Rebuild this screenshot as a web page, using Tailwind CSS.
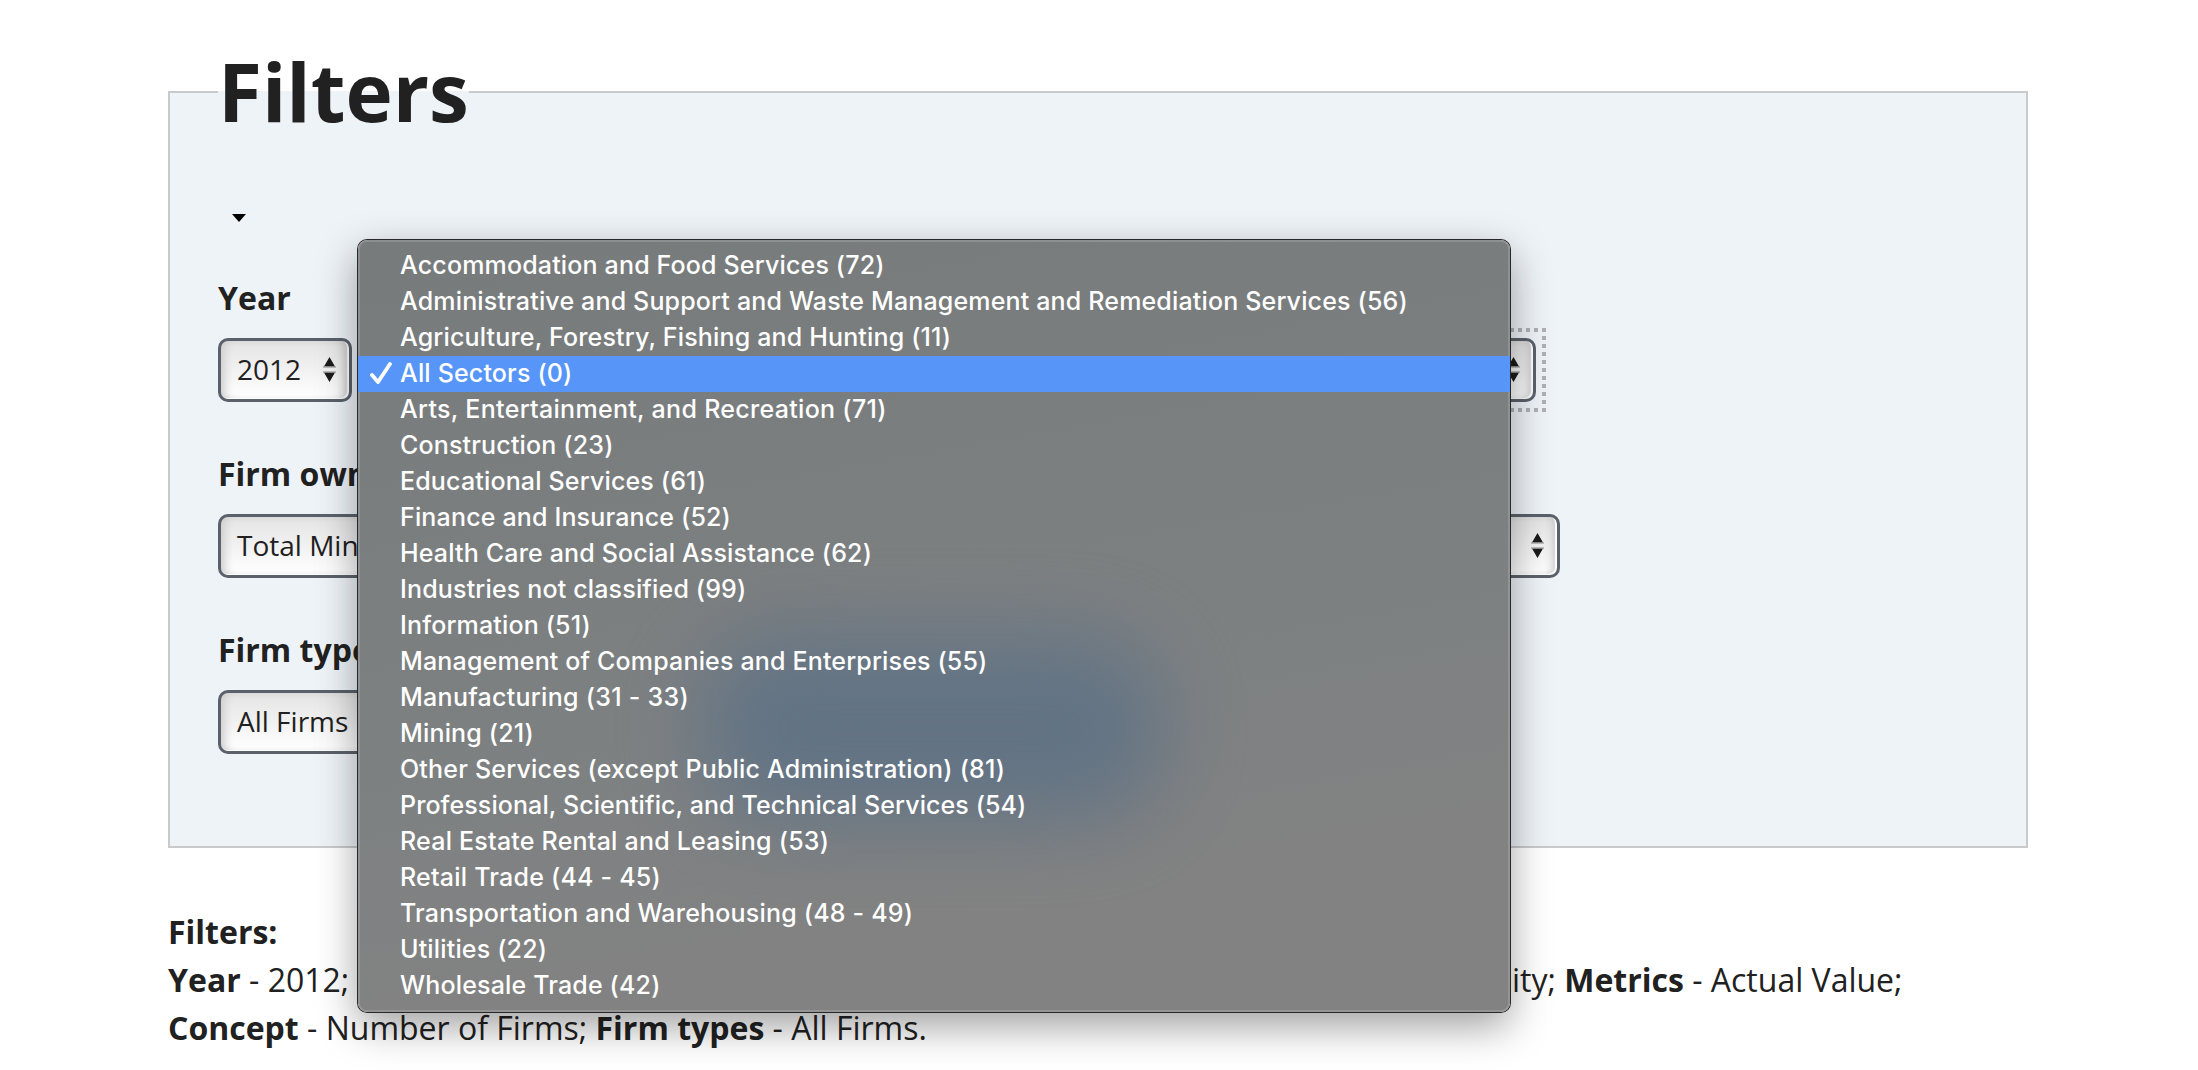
<!DOCTYPE html>
<html lang="en">
<head>
<meta charset="utf-8">
<title>Filters</title>
<script src="https://cdn.jsdelivr.net/npm/@tailwindcss/browser@4"></script>
</head>
<body class="relative h-[1070px] w-[2198px] overflow-hidden bg-white font-['Open_Sans',sans-serif] text-[#212121]">
<svg class="hidden">
  <symbol id="arrows" viewBox="0 0 13 26"><path d="M6.500 0L12 9.500H1zM1 15.500H12L6.500 25z" fill="#1b1b1b"/><path d="M0 10h13M0 15h13" stroke="#8a8a8a" stroke-width="1"/></symbol>
</svg>

<main class="flex flex-col px-[168px] pt-[91px] pr-[170px]">
  <section class="flex h-[757px] flex-col border-2 border-[#c9cacc] bg-[#eef3f8] pl-12">
    <h1 class="-mt-[56px] flex h-[108px] w-[251px] items-center bg-[linear-gradient(#fff_54px,#eef3f8_54px)] text-[80px] leading-none font-bold">Filters</h1>
    <svg class="mt-[69px] ml-[14px] h-2 w-[14px]" viewBox="0 0 14 8"><path d="M0 0h14L7 8z" fill="#000"/></svg>

    <div class="mt-[52px] flex h-16 flex-col">
      <label class="h-16 shrink-0 text-[32px] leading-[48px] font-bold">Year</label>
      <div class="flex gap-6">
        <div class="flex h-16 w-[134px] items-center justify-between rounded-[10px] border-3 border-[#5b616b] bg-linear-to-b from-[#e4e4e4] to-white pr-[13px] pl-4 text-[28px] shadow-[inset_-2px_-1px_1px_#fff,inset_-8px_0_8px_-4px_#c4c4c4,inset_8px_0_8px_-4px_#cfcfcf]"><span class="pb-0.5">2012</span><svg class="h-[26px] w-[13px]"><use href="#arrows"/></svg></div>
        <div class="relative flex h-16 w-[1160px] items-center justify-end rounded-[10px] border-3 border-[#5b616b] bg-linear-to-b from-[#e4e4e4] to-white pr-[13px] shadow-[inset_-2px_-1px_1px_#fff,inset_-8px_0_8px_-4px_#c4c4c4,inset_8px_0_8px_-4px_#cfcfcf]"><svg class="h-[26px] w-[13px]"><use href="#arrows"/></svg>
          <svg class="absolute -top-[13px] -right-[13px] h-[84px] w-[100px]" viewBox="0 0 100 84" fill="none" stroke="#aeb0b4" stroke-width="4" stroke-dasharray="4 4"><path d="M100 2H0M98 0V84M100 82H0"/></svg>
        </div>
      </div>
    </div>
    <div class="mt-28 flex h-16 flex-col">
      <label class="h-16 shrink-0 text-[32px] leading-[48px] font-bold">Firm own</label>
      <div class="flex h-16 w-[1342px] shrink-0 items-center justify-between rounded-[10px] border-3 border-[#5b616b] bg-linear-to-b from-[#e4e4e4] to-white pr-[13px] pl-4 text-[28px] shadow-[inset_-2px_-1px_1px_#fff,inset_-8px_0_8px_-4px_#c4c4c4,inset_8px_0_8px_-4px_#cfcfcf]"><span class="pb-0.5">Total Min</span><svg class="h-[26px] w-[13px]"><use href="#arrows"/></svg></div>
    </div>
    <div class="mt-28 flex h-16 flex-col">
      <label class="h-16 shrink-0 text-[32px] leading-[48px] font-bold">Firm type</label>
      <div class="flex h-16 w-[230px] shrink-0 items-center justify-between rounded-[10px] border-3 border-[#5b616b] bg-linear-to-b from-[#e4e4e4] to-white pr-[13px] pl-4 text-[28px] shadow-[inset_-2px_-1px_1px_#fff,inset_-8px_0_8px_-4px_#c4c4c4,inset_8px_0_8px_-4px_#cfcfcf]"><span class="pb-0.5">All Firms</span><svg class="h-[26px] w-[13px]"><use href="#arrows"/></svg></div>
    </div>
  </section>

  <div class="mt-[60px] text-[32px] leading-[48px]">
    <p class="font-bold">Filters:</p>
    <p class="flex whitespace-pre"><span class="w-[1344px] shrink-0"><b>Year</b> - 2012;</span><span>ity; <b>Metrics</b> - Actual Value;</span></p>
    <p><b>Concept</b> - Number of Firms; <b>Firm types</b> - All Firms.</p>
  </div>
</main>

<div class="absolute top-[240px] left-[358px] h-[772px] w-[1152px] overflow-hidden rounded-[9px] bg-[linear-gradient(165deg,#828282,#7e8182_50%,#797b7c)] bg-[linear-gradient(170deg,#787b7c,#7e8182_60%,#828282_80%)] py-2 font-['Inter',sans-serif] text-[25px] leading-9 font-medium tracking-[.165px] whitespace-nowrap text-white shadow-[inset_0_0_0_2px_rgba(255,255,255,.15),0_0_0_1px_#26282b,0_14px_40px_rgba(0,0,0,.38)]">
  <div class="absolute top-[396px] left-[340px] h-[184px] w-[466px] rounded-[80px] bg-[#5f7285] opacity-90 blur-[42px]"></div>
  <ul class="relative -top-px">
    <li class="pl-[42px]">Accommodation and Food Services (72)</li>
    <li class="pl-[42px]">Administrative and Support and Waste Management and Remediation Services (56)</li>
    <li class="pl-[42px]">Agriculture, Forestry, Fishing and Hunting (11)</li>
    <li class="flex h-9 items-center bg-[linear-gradient(transparent_1px,#5796f8_1px)] shadow-[0_1px_0_#5796f8]"><svg class="ml-3 h-6 w-[22px]" viewBox="0 0 22 24" fill="none" stroke="#fff" stroke-width="3.8" stroke-linecap="round" stroke-linejoin="round"><path d="M2 14l6 7L20 3"/></svg><span class="ml-2">All Sectors (0)</span></li>
    <li class="pl-[42px] tracking-[.3px]">Arts, Entertainment, and Recreation (71)</li>
    <li class="pl-[42px]">Construction (23)</li>
    <li class="pl-[42px]">Educational Services (61)</li>
    <li class="pl-[42px]">Finance and Insurance (52)</li>
    <li class="pl-[42px]">Health Care and Social Assistance (62)</li>
    <li class="pl-[42px]">Industries not classified (99)</li>
    <li class="pl-[42px]">Information (51)</li>
    <li class="pl-[42px]">Management of Companies and Enterprises (55)</li>
    <li class="pl-[42px] tracking-[.28px]">Manufacturing (31 - 33)</li>
    <li class="pl-[42px]">Mining (21)</li>
    <li class="pl-[42px] tracking-[.2px]">Other Services (except Public Administration) (81)</li>
    <li class="pl-[42px] tracking-[.09px]">Professional, Scientific, and Technical Services (54)</li>
    <li class="pl-[42px] tracking-[.22px]">Real Estate Rental and Leasing (53)</li>
    <li class="pl-[42px] tracking-[.22px]">Retail Trade (44 - 45)</li>
    <li class="pl-[42px] tracking-[.2px]">Transportation and Warehousing (48 - 49)</li>
    <li class="pl-[42px]">Utilities (22)</li>
    <li class="pl-[42px]">Wholesale Trade (42)</li>
  </ul>
</div>
</body>
</html>
